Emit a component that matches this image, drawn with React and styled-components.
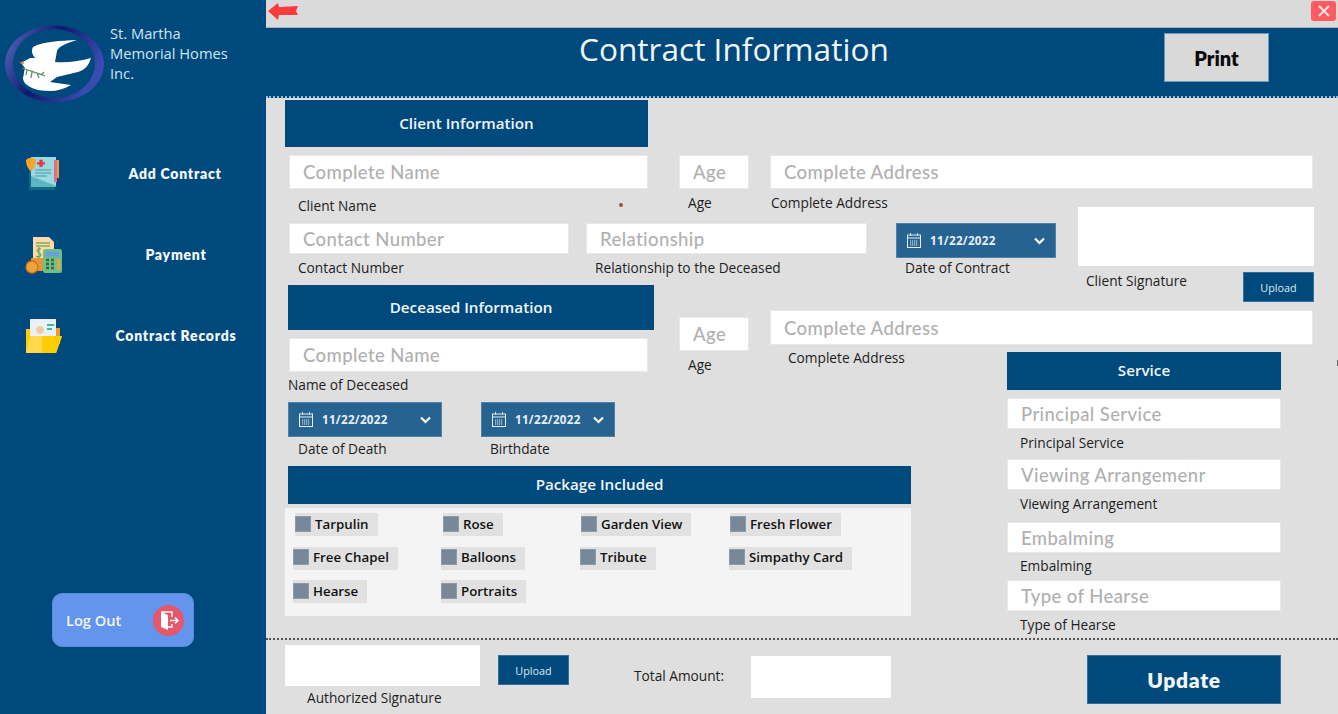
import React from 'react'
import styled, { createGlobalStyle } from 'styled-components'

const navy = '#00497c'
const labelFont = '"Open Sans", "Noto Sans", sans-serif'
const roundFont = '"Lato", "Open Sans", sans-serif'

const GlobalStyle = createGlobalStyle`
  html, body { margin: 0; padding: 0; height: 100%; overflow: hidden; }
  * { box-sizing: border-box; }
  input::placeholder { color: #b0b0b0; opacity: 1; }
`

const Shell = styled.div`
  position: relative;
  display: flex;
  width: 1338px;
  height: 714px;
  overflow: hidden;
  font-family: ${labelFont};
  background: #dfdfdf;
`
const EdgeTick = styled.span`
  position: absolute;
  right: 0;
  top: 360px;
  width: 1px;
  height: 6px;
  background: #666;
`

/* sidebar */
const Sidebar = styled.aside`
  flex: 0 0 266px;
  display: flex;
  flex-direction: column;
  background: ${navy};
`
const Brand = styled.div`
  display: flex;
  height: 133px;
  padding: 25px 0 0 5px;
`
const BrandName = styled.div`
  margin: -2px 0 0 5px;
  color: #cfe4f3;
  font-size: 14.7px;
  line-height: 20px;
`
const NavList = styled.nav`
  display: flex;
  flex-direction: column;
`
const NavItem = styled.a`
  display: flex;
  align-items: center;
  height: 81px;
  padding-left: 25px;
  color: #f4f8fb;
  font-family: ${roundFont};
  font-weight: 800;
  font-size: 14px;
  letter-spacing: 0.75px;
`
const NavLabel = styled.span`
  flex: 1;
  margin-left: 23px;
  text-align: center;
  white-space: nowrap;
`
const LogOut = styled.button`
  display: flex;
  align-items: center;
  justify-content: space-between;
  width: 142px;
  height: 54px;
  margin: auto 0 67px 52px;
  padding: 0 9px 0 13px;
  border: 1px solid #5a8ad8;
  border-radius: 10px;
  background: #6495ed;
  color: #f2f7ff;
  font-family: ${labelFont};
  font-weight: 600;
  font-size: 14.6px;
`

/* main column */
const Main = styled.main`
  flex: 1;
  display: flex;
  flex-direction: column;
  min-width: 0;
`
const TopBar = styled.div`
  display: flex;
  align-items: flex-start;
  justify-content: space-between;
  height: 28px;
  padding: 1px 2px 0 1px;
  background: #dadada;
  border-bottom: 1px solid #a9b4bd;
`
const CloseButton = styled.button`
  display: flex;
  align-items: center;
  justify-content: center;
  width: 25px;
  height: 20px;
  padding: 0;
  border: 0;
  border-radius: 3px;
  background: #ff5a5f;
`
const Header = styled.header`
  display: flex;
  align-items: flex-start;
  height: 70px;
  background: ${navy};
  border-bottom: 2px dotted #9fb9cc;
`
const Title = styled.h1`
  margin: 0 0 0 313px;
  color: #f1f5f8;
  font-weight: 400;
  font-size: 31.6px;
  line-height: 42px;
  white-space: nowrap;
`
const PrintButton = styled.button`
  width: 105px;
  height: 49px;
  margin: 5px 69px 0 auto;
  border: 1px solid #6f9cbc;
  background: #d9d9d9;
  color: #0b0b0b;
  font-family: ${roundFont};
  font-weight: 800;
  font-size: 20px;
`

/* form */
const Form = styled.section`
  display: flex;
  flex-direction: column;
  height: 540px;
  padding: 2px 0 0 19px;
  background: #dfdfdf;
`
const HeadRow = styled.div`
  height: 55px;
`
const SectionHead = styled.div`
  display: flex;
  align-items: center;
  justify-content: center;
  width: ${p => p.$w}px;
  height: ${p => p.$h}px;
  margin-left: ${p => p.$x || 0}px;
  padding-bottom: 2px;
  background: ${navy};
  color: #f2f6f9;
  font-weight: 600;
  font-size: 15.2px;
`
const Row = styled.div`
  display: flex;
  align-items: flex-start;
  height: ${p => p.$h}px;
`
const Field = styled.div`
  position: relative;
  flex: none;
  width: ${p => p.$w}px;
  margin-left: ${p => p.$x || 0}px;
  margin-top: ${p => p.$top || 0}px;
`
const TextInput = styled.input`
  display: block;
  width: 100%;
  height: ${p => p.$h || 34}px;
  padding: 0 13px;
  border: 1px solid #e8e8e8;
  outline: none;
  background: #fff;
  font-family: ${roundFont};
  font-weight: 500;
  font-size: 18.5px;
  letter-spacing: 0.4px;
`
const Label = styled.div`
  height: 18px;
  margin-top: ${p => p.$top || 0}px;
  text-indent: ${p => p.$indent || 0}px;
  color: #1d1d1d;
  font-size: 13.7px;
  line-height: 18px;
  white-space: nowrap;
`
const Speck = styled.span`
  position: absolute;
  left: 330px;
  top: 48px;
  width: 4px;
  height: 4px;
  border-radius: 50%;
  background: #a5532d;
`
const DateBox = styled.div`
  display: flex;
  align-items: center;
  width: 100%;
  height: 35px;
  padding: 0 10px;
  border: 1px solid #4f80a5;
  background: #266391;
  color: #e6f0f7;
  font-weight: 700;
  font-size: 11.6px;
  letter-spacing: 0.3px;
`
const DateText = styled.span`
  margin-left: 9px;
  flex: 1;
`
const SignatureBox = styled.div`
  width: ${p => p.$w}px;
  height: ${p => p.$h}px;
  background: #fff;
`
const SignatureFoot = styled.div`
  display: flex;
  justify-content: space-between;
  margin-top: 6px;
`
const UploadButton = styled.button`
  flex: none;
  width: ${p => p.$w}px;
  height: 30px;
  margin-left: ${p => p.$x || 0}px;
  margin-top: ${p => p.$top || 0}px;
  padding: 0;
  border: 1px solid #35709c;
  background: ${navy};
  color: #dfe9f1;
  font-family: ${labelFont};
  font-weight: 500;
  font-size: 10.8px;
`
const LowerGrid = styled.div`
  display: grid;
  grid-template-columns: 394px 91px 237px 1fr;
  grid-template-rows: 67px 114px 172px;
`
const DeceasedPane = styled.div`
  grid-column: 1;
  grid-row: 1 / 3;
`
const DateRow = styled.div`
  display: flex;
  margin-top: 8px;
`
const AgeCell = styled.div`
  grid-column: 2;
  grid-row: 1;
  width: 70px;
  padding-top: 32px;
`
const AddressCell = styled.div`
  grid-column: 3 / 5;
  grid-row: 1;
  padding-top: 25px;
  width: 543px;
`
const ServicePane = styled.div`
  grid-column: 4;
  grid-row: 2 / 4;
`
const PackagePane = styled.div`
  grid-column: 1 / 4;
  grid-row: 3;
`
const CheckPanel = styled.div`
  display: grid;
  grid-template-columns: 148px 139px 149px auto;
  grid-auto-rows: 23px;
  row-gap: 10.5px;
  justify-items: start;
  width: 626px;
  height: 108px;
  margin-top: 4px;
  padding: 5px 0 0 8px;
  background: #f4f4f4;
`
const CheckItem = styled.label`
  display: flex;
  align-items: center;
  height: 23px;
  margin-left: ${p => p.$shift || 0}px;
  padding: 0 9px 2px 0;
  background: #e1e1e1;
  color: #111;
  font-weight: 600;
  font-size: 13.3px;
  white-space: nowrap;
`
const CheckBoxMark = styled.span`
  width: 16px;
  height: 16px;
  margin-right: 4px;
  background: #778899;
  border: 1px solid #8d9baa;
`

/* footer */
const Divider = styled.div`
  height: 3px;
  border-top: 2px dotted #555;
`
const Footer = styled.footer`
  flex: 1;
  display: flex;
  align-items: flex-start;
  padding: 4px 0 0 19px;
  background: #dfdfdf;
`
const TotalLabel = styled.div`
  margin: 22px 0 0 65px;
  color: #1d1d1d;
  font-size: 13.7px;
  line-height: 18px;
  white-space: nowrap;
`
const TotalBox = styled.div`
  width: 140px;
  height: 42px;
  margin: 11px 0 0 27px;
  background: #fff;
`
const UpdateButton = styled.button`
  width: 194px;
  height: 49px;
  margin: 10px 57px 0 auto;
  border: 1px solid #35709c;
  background: ${navy};
  color: #f2f6f9;
  font-family: ${roundFont};
  font-weight: 800;
  font-size: 21px;
  letter-spacing: 0.7px;
`

function DoveLogo() {
  return (
    <svg width="100" height="80" viewBox="5 25 100 80">
      <defs>
        <linearGradient id="ring" x1="0" y1="0" x2="1" y2="0.4">
          <stop offset="0" stopColor="#5a72c4" />
          <stop offset="0.5" stopColor="#10186e" />
          <stop offset="1" stopColor="#3a4cb0" />
        </linearGradient>
      </defs>
      <ellipse cx="54.5" cy="64" rx="49.5" ry="38.5" fill="url(#ring)" />
      <ellipse cx="54" cy="63.5" rx="41" ry="34.5" fill={navy} />
      <path
        d="M21 63 L30 58 L35 58 C32 54 31 51 33 47 C44 41 60 41 77 40 C66 43 58 47 57 51 L55 62 C68 63 80 61 91 58 C89 65 85 70 78 72 L57 77 L50 82 L71 85 C64 89 57 91 50 91 C42 91 36 90 32 88 C26 85 23 82 23 78 C24 74 24 71 25 68 Z"
        fill="#fff"
      />
      <path d="M19 63 L23 61 L24 64 Z" fill="#d9703a" />
      <path d="M22 68 C28 70 36 73 45 76 M27 70 L26 75 M32 72 L31 78 M37 73 L39 78 M41 75 L44 72" stroke="#5f8f6c" strokeWidth="1.3" fill="none" />
    </svg>
  )
}

function ContractIcon() {
  return (
    <svg width="36" height="36" viewBox="0 0 36 36">
      <rect x="4" y="3" width="26" height="31" fill="#0f6c80" />
      <rect x="6" y="1" width="25" height="30" fill="#9ad9df" />
      <path d="M6 20 L31 30 L31 31 L6 31 Z" fill="#59b7c4" />
      <path d="M13 6 h4 v3 h3 v3 h-3 v3 h-4 v-3 h-3 v-3 h3 z" fill="#e5393f" transform="translate(4 -1) scale(0.8)" />
      <path d="M10 14 h16 M10 17 h16 M10 20 h12" stroke="#4c99a8" strokeWidth="1" />
      <path d="M1 4 C4 1 8 1 11 4 C11 9 9 13 6 15 C3 13 1 9 1 4 Z" fill="#f4a52e" />
      <rect x="29" y="4" width="3" height="22" fill="#e86a8a" />
      <rect x="32" y="4" width="2" height="18" fill="#d9a63a" />
    </svg>
  )
}

function PaymentIcon() {
  return (
    <svg width="38" height="38" viewBox="0 0 38 38">
      <path d="M8 1 H24 L29 6 V30 H8 Z" fill="#fcd9a8" />
      <path d="M11 7 h14 M11 10 h14" stroke="#7fae5c" strokeWidth="1.3" />
      <path d="M16 13 C13 12 11 14 13 16 C16 17 17 20 14 21 C12 21 11 20 11 20 M14 11 V23" stroke="#6aa84f" strokeWidth="1.2" fill="none" />
      <rect x="6" y="22" width="12" height="13" rx="1" fill="#e8923a" />
      <circle cx="7" cy="31" r="6" fill="#f0a338" stroke="#c9741d" strokeWidth="1.3" />
      <rect x="18" y="13" width="19" height="24" rx="2.5" fill="#6dc08a" />
      <rect x="20.5" y="15.5" width="14" height="5" fill="#6a9fd8" />
      <path d="M21 24 h3 M26 24 h3 M21 28 h3 M26 28 h3 M21 32 h3 M26 32 h3" stroke="#2e6d46" strokeWidth="2.4" />
      <path d="M32 23 h3 v11 h-3 z" fill="#f0a338" />
    </svg>
  )
}

function RecordsIcon() {
  return (
    <svg width="38" height="36" viewBox="0 0 38 36">
      <rect x="30" y="10" width="5" height="16" fill="#ef9a2d" />
      <rect x="5" y="1" width="26" height="26" fill="#e9f1f4" />
      <circle cx="15" cy="12" r="3.8" fill="#f6c9a0" />
      <path d="M9 24 C9 18 21 18 21 24 Z" fill="#3fb6a8" />
      <path d="M22 7 h7 M22 11 h5" stroke="#3fb6a8" strokeWidth="1.8" />
      <path d="M1 11 H5 V35 H1 Z" fill="#ffcc00" />
      <path d="M1 35 L5 18 H37 L31 35 Z" fill="#ffd84d" />
      <path d="M17 18 H37 L31 35 H17 Z" fill="#ffcd00" />
    </svg>
  )
}

function ExitIcon() {
  return (
    <svg width="31" height="31" viewBox="0 0 31 31">
      <circle cx="15.5" cy="15.5" r="15.5" fill="#e5576a" />
      <path d="M8 7 L15 10 V25 L8 22 Z" fill="#fff" />
      <path d="M8 7 H19 V12 M19 19 V22 H15" stroke="#fff" strokeWidth="1.4" fill="none" />
      <path d="M17 15.5 H25 M22 12.5 L25 15.5 L22 18.5" stroke="#fff" strokeWidth="1.5" fill="none" />
    </svg>
  )
}

function BackArrow() {
  return (
    <svg width="32" height="19" viewBox="0 -1 32 19">
      <path d="M1 9 L11 1 L12 5 L31 4 L29 9 L31 13 L12 13 L11 18 Z" fill="#fb3b3e" />
    </svg>
  )
}

function CloseIcon() {
  return (
    <svg width="12" height="12" viewBox="0 0 12 12">
      <path d="M1 1 L11 11 M11 1 L1 11" stroke="#ffe6e6" strokeWidth="2" />
    </svg>
  )
}

function DatePicker() {
  return (
    <DateBox>
      <svg width="14" height="15" viewBox="0 0 14 15" fill="none" stroke="#e6f0f7" strokeWidth="1">
        <rect x="0.5" y="2" width="13" height="12.5" />
        <path d="M0.5 5 H13.5 M3.5 0 V3 M10.5 0 V3" />
        <path d="M3 8 H11 M3 10 H11 M3 12 H11" strokeDasharray="1.2 0.8" />
      </svg>
      <DateText>11/22/2022</DateText>
      <svg width="11" height="8" viewBox="0 0 11 8" fill="none" stroke="#fff" strokeWidth="2.2">
        <path d="M1 1.5 L5.5 6 L10 1.5" />
      </svg>
    </DateBox>
  )
}

const packages = [
  ['Tarpulin', 2], ['Rose', 2], ['Garden View', 1], ['Fresh Flower', 1],
  ['Free Chapel', 0], ['Balloons', 0], ['Tribute', 0], ['Simpathy Card', 0],
  ['Hearse', 0], ['Portraits', 0],
]

export default function App() {
  return (
    <Shell>
      <GlobalStyle />
      <Sidebar>
        <Brand>
          <DoveLogo />
          <BrandName>St. Martha<br />Memorial Homes<br />Inc.</BrandName>
        </Brand>
        <NavList>
          <NavItem><ContractIcon /><NavLabel>Add Contract</NavLabel></NavItem>
          <NavItem><PaymentIcon /><NavLabel>Payment</NavLabel></NavItem>
          <NavItem><RecordsIcon /><NavLabel>Contract Records</NavLabel></NavItem>
        </NavList>
        <LogOut>Log Out<ExitIcon /></LogOut>
      </Sidebar>

      <Main>
        <TopBar>
          <BackArrow />
          <CloseButton><CloseIcon /></CloseButton>
        </TopBar>
        <Header>
          <Title>Contract Information</Title>
          <PrintButton>Print</PrintButton>
        </Header>

        <Form>
          <HeadRow>
            <SectionHead $w={363} $h={47}>Client Information</SectionHead>
          </HeadRow>

          <Row $h={52}>
            <Field $w={359} $x={4}>
              <TextInput placeholder="Complete Name" />
              <Label $top={8} $indent={9}>Client Name</Label>
              <Speck />
            </Field>
            <Field $w={70} $x={31}>
              <TextInput placeholder="Age" />
              <Label $top={5} $indent={9}>Age</Label>
            </Field>
            <Field $w={543} $x={21}>
              <TextInput placeholder="Complete Address" />
              <Label $top={5} $indent={1}>Complete Address</Label>
            </Field>
          </Row>

          <Row $h={78}>
            <Field $w={280} $x={4} $top={16}>
              <TextInput $h={31} placeholder="Contact Number" />
              <Label $top={5} $indent={9}>Contact Number</Label>
            </Field>
            <Field $w={281} $x={17} $top={16}>
              <TextInput $h={31} placeholder="Relationship" />
              <Label $top={5} $indent={9}>Relationship to the Deceased</Label>
            </Field>
            <Field $w={160} $x={29} $top={16}>
              <DatePicker />
              <Label $top={1} $indent={9}>Date of Contract</Label>
            </Field>
            <Field $w={236} $x={22}>
              <SignatureBox $w={236} $h={59} />
              <SignatureFoot>
                <Label $indent={8}>Client Signature</Label>
                <UploadButton $w={71}>Upload</UploadButton>
              </SignatureFoot>
            </Field>
          </Row>

          <LowerGrid>
            <DeceasedPane>
              <SectionHead $w={366} $h={45} $x={3}>Deceased Information</SectionHead>
              <Field $w={359} $x={4} $top={8}>
                <TextInput placeholder="Complete Name" />
                <Label $top={4} $indent={-1}>Name of Deceased</Label>
              </Field>
              <DateRow>
                <Field $w={154} $x={3}>
                  <DatePicker />
                  <Label $top={3} $indent={10}>Date of Death</Label>
                </Field>
                <Field $w={134} $x={39}>
                  <DatePicker />
                  <Label $top={3} $indent={9}>Birthdate</Label>
                </Field>
              </DateRow>
            </DeceasedPane>

            <AgeCell>
              <TextInput placeholder="Age" />
              <Label $top={5} $indent={9}>Age</Label>
            </AgeCell>
            <AddressCell>
              <TextInput $h={35} placeholder="Complete Address" />
              <Label $top={4} $indent={18}>Complete Address</Label>
            </AddressCell>

            <ServicePane>
              <SectionHead $w={274} $h={38}>Service</SectionHead>
              <Field $w={274} $top={8}>
                <TextInput $h={31} placeholder="Principal Service" />
                <Label $top={5} $indent={13}>Principal Service</Label>
              </Field>
              <Field $w={274} $top={7}>
                <TextInput $h={31} placeholder="Viewing Arrangemenr" />
                <Label $top={5} $indent={13}>Viewing Arrangement</Label>
              </Field>
              <Field $w={274} $top={9}>
                <TextInput $h={31} placeholder="Embalming" />
                <Label $top={4} $indent={13}>Embalming</Label>
              </Field>
              <Field $w={274} $top={5}>
                <TextInput $h={31} placeholder="Type of Hearse" />
                <Label $top={5} $indent={13}>Type of Hearse</Label>
              </Field>
            </ServicePane>

            <PackagePane>
              <SectionHead $w={623} $h={38} $x={3}>Package Included</SectionHead>
              <CheckPanel>
                {packages.map(([name, shift]) => (
                  <CheckItem key={name} $shift={shift}>
                    <CheckBoxMark />{name}
                  </CheckItem>
                ))}
              </CheckPanel>
            </PackagePane>
          </LowerGrid>
        </Form>

        <Divider />
        <Footer>
          <div>
            <SignatureBox $w={195} $h={41} />
            <Label $top={3} $indent={22}>Authorized Signature</Label>
          </div>
          <UploadButton $w={71} $x={18} $top={10}>Upload</UploadButton>
          <TotalLabel>Total Amount:</TotalLabel>
          <TotalBox />
          <UpdateButton>Update</UpdateButton>
        </Footer>
      </Main>
      <EdgeTick />
    </Shell>
  )
}
